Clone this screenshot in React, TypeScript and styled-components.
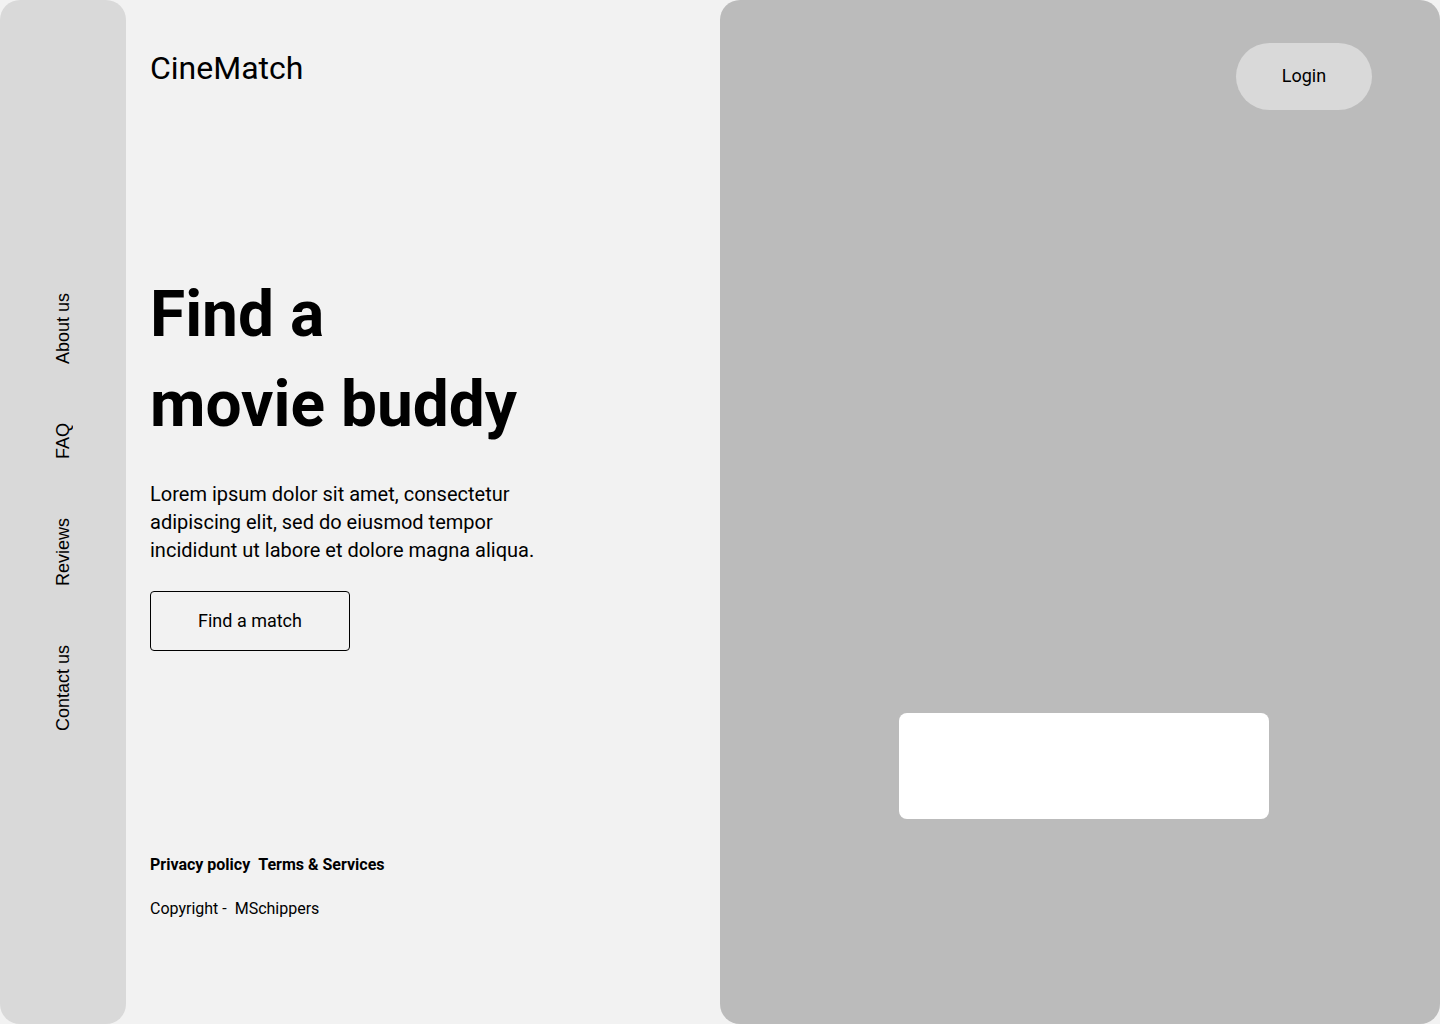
import React from "react";
import styled, { createGlobalStyle } from "styled-components";

const GlobalStyle = createGlobalStyle`
  html, body {
    margin: 0;
    padding: 0;
    background: #f2f2f2;
  }
  * { box-sizing: border-box; }
`;

const Page = styled.div`
  display: flex;
  width: 1440px;
  height: 1024px;
  background: #f2f2f2;
  color: #000;
  font-family: Roboto, "Liberation Sans", sans-serif;
`;

const Sidebar = styled.nav`
  width: 126px;
  flex: none;
  background: #d9d9d9;
  border-radius: 20px;
  display: flex;
  flex-direction: column;
  align-items: center;
  justify-content: center;
  gap: 59px;
`;

const SideLink = styled.a`
  writing-mode: vertical-rl;
  transform: rotate(180deg);
  font-family: "Liberation Sans", Arial, sans-serif;
  font-size: 18px;
  line-height: 20px;
  color: #000;
  text-decoration: none;
  white-space: nowrap;
`;

const Main = styled.main`
  flex: 1;
  display: flex;
  flex-direction: column;
  padding: 49px 24px 0;
`;

const Logo = styled.div`
  font-size: 32px;
  line-height: 1.2;
  font-weight: 400;
`;

const Heading = styled.h1`
  margin: 183px 0 0;
  font-size: 64px;
  line-height: 90px;
  font-weight: 700;
`;

const Lead = styled.p`
  margin: 30px 0 0;
  font-size: 20px;
  line-height: 28px;
  max-width: 400px;
`;

const OutlineButton = styled.button`
  margin-top: 27px;
  width: 200px;
  height: 60px;
  padding: 0 0 2px;
  border: 1px solid #000;
  border-radius: 4px;
  background: transparent;
  font-family: Roboto, sans-serif;
  font-size: 18px;
  color: #000;
  cursor: pointer;
`;

const Footer = styled.footer`
  margin-top: 203.5px;
  display: flex;
  flex-direction: column;
  gap: 24px;
  font-size: 16px;
  line-height: 20px;
`;

const FooterLinks = styled.div`
  display: flex;
  gap: 8px;
  font-weight: 700;
`;

const Copyright = styled.div`
  white-space: pre;
`;

const Visual = styled.section`
  width: 720px;
  flex: none;
  background: #bbbbbb;
  border-radius: 20px;
  display: flex;
  flex-direction: column;
  padding: 43px 68px 0 0;
`;

const LoginButton = styled.button`
  align-self: flex-end;
  width: 136px;
  height: 67px;
  padding: 0 0 2px;
  border: none;
  border-radius: 34px;
  background: #d9d9d9;
  font-family: Roboto, sans-serif;
  font-size: 18px;
  color: #000;
  cursor: pointer;
`;

const Card = styled.div`
  margin: 603px 0 0 179px;
  width: 370px;
  height: 106px;
  background: #fff;
  border-radius: 8px;
`;

export default function App() {
  return (
    <>
      <GlobalStyle />
      <Page>
        <Sidebar>
          <SideLink href="#">About us</SideLink>
          <SideLink href="#">FAQ</SideLink>
          <SideLink href="#">Reviews</SideLink>
          <SideLink href="#">Contact us</SideLink>
        </Sidebar>
        <Main>
          <Logo>CineMatch</Logo>
          <Heading>
            Find a
            <br />
            movie buddy
          </Heading>
          <Lead>
            Lorem ipsum dolor sit amet, consectetur adipiscing elit, sed do eiusmod tempor
            incididunt ut labore et dolore magna aliqua.
          </Lead>
          <OutlineButton>Find a match</OutlineButton>
          <Footer>
            <FooterLinks>
              <span>Privacy policy</span>
              <span>Terms &amp; Services</span>
            </FooterLinks>
            <Copyright>{"Copyright -  MSchippers"}</Copyright>
          </Footer>
        </Main>
        <Visual>
          <LoginButton>Login</LoginButton>
          <Card />
        </Visual>
      </Page>
    </>
  );
}
